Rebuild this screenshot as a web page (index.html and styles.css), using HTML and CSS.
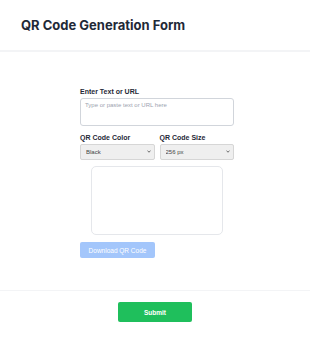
FILE: index.html
```html
<!DOCTYPE html>
<html lang="en">
<head>
    <meta charset="UTF-8">
    <meta name="viewport" content="width=device-width, initial-scale=1.0">
    <title>QR Code Generation Form</title>
    <link rel="stylesheet" href="styles.css">
</head>
<body>
    <header class="page-header">
        <h1>QR Code Generation Form</h1>
    </header>

    <main class="form-body">
        <div class="form-inner">
            <label class="field-label" for="qr-text">Enter Text or URL</label>
            <textarea id="qr-text" class="text-input" placeholder="Type or paste text or URL here"></textarea>

            <div class="option-row">
                <div class="option">
                    <label class="field-label" for="qr-color">QR Code Color</label>
                    <div class="select-wrap">
                        <select id="qr-color" class="select-input">
                            <option>Black</option>
                            <option>Blue</option>
                            <option>Red</option>
                        </select>
                        <svg class="chevron" viewBox="0 0 4 3"><path d="M0.5 0.8 L2 2.2 L3.5 0.8" fill="none" stroke="#444" stroke-width="0.8"/></svg>
                    </div>
                </div>
                <div class="option">
                    <label class="field-label" for="qr-size">QR Code Size</label>
                    <div class="select-wrap">
                        <select id="qr-size" class="select-input">
                            <option>256 px</option>
                            <option>128 px</option>
                            <option>512 px</option>
                        </select>
                        <svg class="chevron" viewBox="0 0 4 3"><path d="M0.5 0.8 L2 2.2 L3.5 0.8" fill="none" stroke="#444" stroke-width="0.8"/></svg>
                    </div>
                </div>
            </div>

            <div class="qr-preview"></div>

            <button class="download-btn" disabled>Download QR Code</button>
        </div>
    </main>

    <footer class="form-footer">
        <button class="submit-btn">Submit</button>
    </footer>
</body>
</html>
```

FILE: styles.css
```css
body {
    margin: 0;
    font-family: Inter, "Liberation Sans", Arial, sans-serif;
    background: #fff;
    color: #1f2937;
}

.page-header {
    height: 50px;
    padding-left: 21px;
    display: flex;
    align-items: center;
    border-bottom: 2px solid #f3f4f6;
}

.page-header h1 {
    margin: 0;
    font-size: 13px;
    font-weight: 700;
    color: #1f2937;
}

.form-body {
    padding-top: 35px;
}

.form-inner {
    width: 154px;
    margin: 0 auto;
    position: relative;
    left: 2px;
}

.field-label {
    display: block;
    font-family: "Liberation Sans", Arial, sans-serif;
    font-size: 7px;
    line-height: 9px;
    font-weight: 700;
    color: #1f2937;
    margin-bottom: 2px;
}

.text-input {
    display: block;
    box-sizing: border-box;
    width: 100%;
    height: 28px;
    padding: 3px 4px;
    border: 1px solid #d1d5db;
    border-radius: 3px;
    font-family: "Liberation Sans", Arial, sans-serif;
    font-size: 6px;
    resize: none;
}

.text-input::placeholder {
    color: #9ca3af;
}

.option-row {
    display: flex;
    gap: 5px;
    margin-top: 7px;
}

.option {
    flex: 1;
}

.select-wrap {
    position: relative;
}

.select-input {
    display: block;
    box-sizing: border-box;
    width: 100%;
    height: 16px;
    padding: 0 5px;
    border: 1px solid #d6d6d6;
    border-radius: 2px;
    background: #efefef;
    -webkit-appearance: none;
    appearance: none;
    font-family: "Liberation Sans", Arial, sans-serif;
    font-size: 6px;
    color: #444;
}

.chevron {
    position: absolute;
    right: 4px;
    top: 6px;
    width: 4px;
    height: 3px;
    pointer-events: none;
}

.qr-preview {
    box-sizing: border-box;
    width: 132px;
    height: 69px;
    margin: 6px auto 0;
    border: 1px solid #e5e7eb;
    border-radius: 5px;
}

.download-btn {
    display: block;
    width: 75px;
    height: 16px;
    margin-top: 7px;
    padding: 0;
    border: none;
    border-radius: 2px;
    background: #a3c6fb;
    color: #fff;
    font-family: "Liberation Sans", Arial, sans-serif;
    font-size: 6.5px;
}

.form-footer {
    margin-top: 32px;
    border-top: 1px solid #f3f4f6;
    padding-top: 11px;
    display: flex;
    justify-content: center;
}

.submit-btn {
    width: 74px;
    height: 20px;
    border: none;
    border-radius: 2px;
    background: #1fbf5c;
    color: #fff;
    font-family: "Liberation Sans", Arial, sans-serif;
    font-size: 6.5px;
    font-weight: 700;
    cursor: pointer;
}
```
